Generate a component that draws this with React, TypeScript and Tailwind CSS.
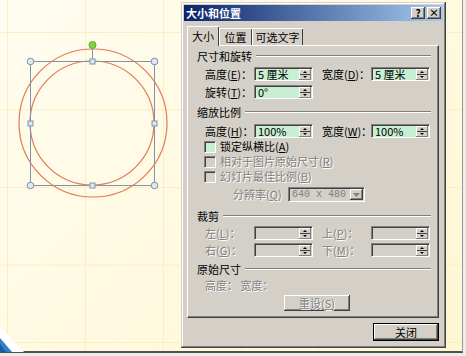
import type { ReactNode } from "react";

// 公共字体
const cjk = "font-['Noto_Sans_CJK_SC','Noto_Sans',sans-serif]";
const dis = "text-[#808080] [text-shadow:1px_1px_0_#ffffff]";

function Label({ children, disabled }: { children: ReactNode; disabled?: boolean }) {
  return (
    <div className={`w-[49px] shrink-0 whitespace-nowrap text-[11px] leading-[13px] ${disabled ? dis : "text-black"}`}>
      {children}
    </div>
  );
}

function SpinButtons() {
  return (
    <svg width="12" height="11" viewBox="0 0 12 11" className="mr-[1px] shrink-0">
      <rect x="0" y="0" width="12" height="11" fill="#d4d0c8" />
      <line x1="0" y1="0.5" x2="12" y2="0.5" stroke="#ffffff" />
      <line x1="0.5" y1="0" x2="0.5" y2="11" stroke="#ffffff" />
      <line x1="0" y1="10.5" x2="12" y2="10.5" stroke="#808080" />
      <line x1="11.5" y1="0" x2="11.5" y2="11" stroke="#808080" />
      <line x1="1" y1="5.5" x2="11" y2="5.5" stroke="#404040" />
      <polygon points="4,4 8,4 6,2" fill="#000" />
      <polygon points="4,7 8,7 6,9" fill="#000" />
    </svg>
  );
}

function SpinBox({ value, disabled }: { value?: string; disabled?: boolean }) {
  return (
    <div
      className={`flex h-[14px] w-[59px] shrink-0 items-center border border-t-[#808080] border-l-[#808080] border-r-white border-b-white shadow-[inset_1px_1px_#404040] ${
        disabled ? "bg-[#d4d0c8]" : "bg-[#c8eed3]"
      }`}
    >
      <div className="flex-1 whitespace-nowrap pl-[3px] text-[11px] leading-[12px] text-black">{value}</div>
      <SpinButtons />
    </div>
  );
}

function CheckRow({ children, disabled }: { children: ReactNode; disabled?: boolean }) {
  return (
    <div className="flex h-[15px] items-center pl-[7px]">
      <div
        className={`h-[12px] w-[12px] border border-t-[#808080] border-l-[#808080] border-r-white border-b-white shadow-[inset_1px_1px_#404040] ${
          disabled ? "bg-[#d4d0c8]" : "bg-[#c8eed3]"
        }`}
      />
      <div className={`ml-[4px] text-[11px] leading-[13px] ${disabled ? dis : "text-black"}`}>{children}</div>
    </div>
  );
}

function GroupHeader({ title }: { title: string }) {
  return (
    <div className="flex h-[12px] items-center">
      <span className="text-[11px] leading-[12px] text-black">{title}</span>
      <div className="ml-[4px] h-[2px] flex-1 border-t border-t-[#808080] border-b border-b-white" />
    </div>
  );
}

function Raised({ className, children }: { className: string; children?: ReactNode }) {
  return (
    <div
      className={`flex items-center justify-center bg-[#d4d0c8] shadow-[inset_-1px_-1px_#404040,inset_1px_1px_#ffffff,inset_-2px_-2px_#808080] ${className}`}
    >
      {children}
    </div>
  );
}

function Slide() {
  return (
    <svg width="462" height="352" className="absolute left-0 top-0">
      <circle cx="93" cy="123" r="74" fill="none" stroke="#e27a55" strokeWidth="1.2" />
      <circle cx="92" cy="123" r="62" fill="none" stroke="#e27a55" strokeWidth="1.2" />
      <rect x="30.5" y="61.5" width="124" height="124" fill="none" stroke="#7e93ab" strokeWidth="1" />
      <line x1="92.5" y1="46" x2="92.5" y2="61" stroke="#7e93ab" />
      <circle cx="92.5" cy="45" r="3.5" fill="#7fd63f" stroke="#5fa838" />
      {[
        [30.5, 61.5],
        [154.5, 61.5],
        [30.5, 185.5],
        [154.5, 185.5],
      ].map(([x, y]) => (
        <circle key={`${x}-${y}`} cx={x} cy={y} r="3.3" fill="#dbe9f2" stroke="#7e93ab" />
      ))}
      {[
        [92.5, 61.5],
        [30.5, 123.5],
        [154.5, 123.5],
        [92.5, 185.5],
      ].map(([x, y]) => (
        <rect key={`${x}-${y}`} x={x - 2.5} y={y - 2.5} width="5" height="5" fill="#dbe9f2" stroke="#7e93ab" />
      ))}
      {/* 左下角装饰 */}
      <polygon points="0,326 24,352 0,352" fill="#ffffff" />
      <polygon points="0,338 12,352 0,352" fill="#2f7fc8" />
      <polygon points="0,344 6,352 0,352" fill="#1b5c9e" />
    </svg>
  );
}

export default function App() {
  return (
    <div className={`relative h-[356px] w-[466px] overflow-hidden bg-[#ececec] ${cjk}`}>
      {/* 幻灯片区域 */}
      <div className="absolute left-0 top-0 h-[353px] w-[463px] border-r border-r-[#9a9a9a] border-b-2 border-b-[#505050] bg-[linear-gradient(135deg,#fffdf0,#fff6d2)]">
        <div className="absolute inset-0 bg-[linear-gradient(to_right,#fbeec4_1px,transparent_1px),linear-gradient(to_bottom,#fbeec4_1px,transparent_1px)] [background-position:7px_32px] [background-size:78px_77.5px]" />
        <Slide />
      </div>

      {/* 对话框 */}
      <div className="absolute left-[181px] top-[2px] flex h-[346px] w-[265px] flex-col bg-[#d4d0c8] p-[3px] shadow-[inset_-1px_-1px_#404040,inset_1px_1px_#d4d0c8,inset_-2px_-2px_#808080,inset_2px_2px_#ffffff]">
        {/* 标题栏 */}
        <div className="flex h-[16px] items-center bg-[linear-gradient(to_right,#0a246a,#a6caf0)] pl-[2px] pr-[2px]">
          <span className="flex-1 text-[11px] font-bold leading-[12px] text-white">大小和位置</span>
          <Raised className="h-[12px] w-[14px] text-[10px] font-bold leading-[10px] text-black">?</Raised>
          <Raised className="ml-[2px] h-[12px] w-[14px] text-[10px] font-bold leading-[10px] text-black">×</Raised>
        </div>

        {/* 选项卡 */}
        <div className="ml-[3px] mt-[5px] flex items-end">
          <div className="relative z-10 -mb-[1px] flex h-[20px] w-[32px] items-center justify-center bg-[#d4d0c8] pb-[1px] text-[11px] leading-[12px] shadow-[inset_1px_1px_#ffffff,inset_-1px_0_#404040]">
            大小
          </div>
          <div className="flex h-[17px] w-[33px] items-center justify-center text-[11px] leading-[12px] shadow-[inset_1px_1px_#ffffff,inset_-1px_0_#404040]">
            位置
          </div>
          <div className="flex h-[17px] w-[51px] items-center justify-center text-[11px] leading-[12px] shadow-[inset_1px_1px_#ffffff,inset_-1px_0_#404040]">
            可选文字
          </div>
        </div>

        {/* 选项卡内容 */}
        <div className="ml-[3px] mr-[4px] flex h-[273px] flex-col border border-t-white border-l-white border-r-[#404040] border-b-[#404040] pl-[9px] pr-[7px] pt-[4px] shadow-[inset_-1px_-1px_#808080]">
          <GroupHeader title="尺寸和旋转" />
          <div className="mt-[5px] flex items-center pl-[8px]">
            <Label>高度(<u>E</u>)：</Label>
            <SpinBox value="5 厘米" />
            <div className="ml-[9px]" />
            <Label>宽度(<u>D</u>)：</Label>
            <SpinBox value="5 厘米" />
          </div>
          <div className="mt-[4px] flex items-center pl-[8px]">
            <Label>旋转(<u>T</u>)：</Label>
            <SpinBox value="0°" />
          </div>

          <div className="mt-[7px]">
            <GroupHeader title="缩放比例" />
          </div>
          <div className="mt-[6px] flex items-center pl-[8px]">
            <Label>高度(<u>H</u>)：</Label>
            <SpinBox value="100%" />
            <div className="ml-[9px]" />
            <Label>宽度(<u>W</u>)：</Label>
            <SpinBox value="100%" />
          </div>
          <div className="mt-[1px]">
            <CheckRow>锁定纵横比(<u>A</u>)</CheckRow>
            <CheckRow disabled>相对于图片原始尺寸(<u>R</u>)</CheckRow>
            <CheckRow disabled>幻灯片最佳比例(<u>B</u>)</CheckRow>
          </div>
          <div className="mt-[3px] flex h-[15px] items-center pl-[36px]">
            <div className={`w-[55px] whitespace-nowrap text-[11px] leading-[13px] ${dis}`}>
              分辨率(<u>Q</u>)
            </div>
            <div className="flex h-[15px] w-[77px] items-center border border-t-[#808080] border-l-[#808080] border-r-white border-b-white bg-[#d4d0c8] shadow-[inset_1px_1px_#404040]">
              <span className="flex-1 whitespace-nowrap pl-[3px] font-['Liberation_Mono',monospace] text-[10px] leading-[12px] text-[#808080]">
                640 x 480
              </span>
              <Raised className="mr-[1px] h-[11px] w-[13px] shrink-0">
                <svg width="7" height="4" viewBox="0 0 7 4">
                  <polygon points="0,0 7,0 3.5,4" fill="#808080" />
                </svg>
              </Raised>
            </div>
          </div>

          <div className="mt-[8px]">
            <GroupHeader title="裁剪" />
          </div>
          <div className="mt-[4px] flex items-center pl-[8px]">
            <Label disabled>左(<u>L</u>)：</Label>
            <SpinBox disabled />
            <div className="ml-[9px]" />
            <Label disabled>上(<u>P</u>)：</Label>
            <SpinBox disabled />
          </div>
          <div className="mt-[3px] flex items-center pl-[8px]">
            <Label disabled>右(<u>G</u>)：</Label>
            <SpinBox disabled />
            <div className="ml-[9px]" />
            <Label disabled>下(<u>M</u>)：</Label>
            <SpinBox disabled />
          </div>

          <div className="mt-[6px]">
            <GroupHeader title="原始尺寸" />
          </div>
          <div className={`mt-[4px] pl-[8px] text-[11px] leading-[12px] ${dis}`}>高度：&nbsp;宽度：</div>
          <div className="mt-[4px] flex pl-[87px]">
            <Raised className={`h-[16px] w-[66px] text-[11px] leading-[12px] ${dis}`}>
              重设(<u>S</u>)
            </Raised>
          </div>
        </div>

        {/* 底部按钮 */}
        <div className="mr-[4px] mt-[5px] flex justify-end">
          <div className="border border-black">
            <Raised className="h-[16px] w-[64px] text-[11px] leading-[12px] text-black">关闭</Raised>
          </div>
        </div>
      </div>
    </div>
  );
}
